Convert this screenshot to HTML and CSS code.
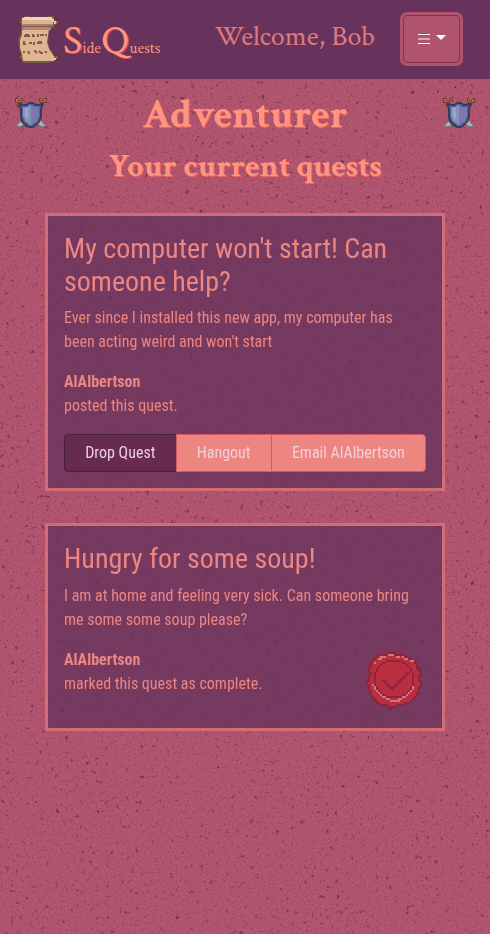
FILE: index.html
```html
<!DOCTYPE html>
<html lang="en">
<head>
<meta charset="utf-8">
<meta name="viewport" content="width=device-width, initial-scale=1">
<title>SideQuests</title>
<link rel="stylesheet" href="styles.css">
</head>
<body>
<svg class="texture" aria-hidden="true">
  <filter id="grain" x="0" y="0" width="100%" height="100%" color-interpolation-filters="sRGB">
    <feTurbulence type="fractalNoise" baseFrequency="0.5" numOctaves="2" seed="7" result="fine"/>
    <feColorMatrix in="fine" type="matrix" values="0 0 0 0 0.42  0 0 0 0 0.18  0 0 0 0 0.3  1.5 0 0 0 -0.82" result="dust"/>
    <feTurbulence type="fractalNoise" baseFrequency="0.2" numOctaves="3" seed="12"/>
    <feColorMatrix type="matrix" values="0 0 0 0 0.36  0 0 0 0 0.15  0 0 0 0 0.26  0 4 0 0 -2.7" result="specks"/>
    <feMerge><feMergeNode in="dust"/><feMergeNode in="specks"/></feMerge>
  </filter>
  <rect width="100%" height="100%" filter="url(#grain)"/>
</svg>

<svg class="defs" aria-hidden="true">
  <symbol id="shield" viewBox="0 0 32 32">
    <path d="M1 29L7 21L12 25L7 30H1ZM31 29L25 21L20 25L25 30H31Z" fill="#77747f"/>
    <path d="M2 29L7 23L11 25L6 29ZM30 29L25 23L21 25L26 29Z" fill="#b7b4b8"/>
    <path d="M0 1H3V3H6V1H8V4L5 9H3V6H0ZM32 1H29V3H26V1H24V4L27 9H29V6H32Z" fill="#713c2d"/>
    <path d="M1 2H3V4H6V2H7V4L4 7V5H1ZM31 2H29V4H26V2H25V4L28 7V5H31Z" fill="#b66b35"/>
    <path d="M4 5L8 7H11L14 5H18L21 7H24L28 5V9L27 12V20L25 25L21 29L18 31H14L10 29L6 25L5 20V12L4 9Z" fill="#363a5c"/>
    <path d="M6 8L9 9H12L14 7H18L20 9H23L26 8L25 13V20L23 25L18 29H14L9 25L7 20V13Z" fill="#596492"/>
    <path d="M8 10H12L15 8L17 9V28H15L10 24L8 19Z" fill="#8590bb"/>
    <path d="M10 11H13V23L10 19Z" fill="#9ca5ca"/>
    <path d="M16 9L20 10H24V19L22 24L16 28Z" fill="#7e77ad"/>
  </symbol>
</svg>

<header class="topbar">
  <a class="brand" href="#">
    <svg class="scroll" viewBox="0 0 48 48" aria-hidden="true">
      <path d="M2 8L7 4V11H4ZM39 2L45 6V8L40 12ZM2 42L7 38V46ZM37 39L41 38L46 42L40 47Z" fill="#5b3435"/>
      <path d="M4 7L7 5V10ZM40 5L44 7L40 10ZM4 42L7 40V44ZM39 41L44 42L40 45Z" fill="#a85e56"/>
      <path d="M6 2H10V1H14V2H33V1H39V4L41 7L39 13H34V20L33 27L35 34L39 39L40 47H35V48H9V47H7L6 40L4 33L3 25L6 17V12Z" fill="#6d5c49"/>
      <path d="M7 15H34L33 20L32 27L34 34L38 40L39 46H8L7 39L5 33L5 25L7 20Z" fill="#dfb591"/>
      <path d="M7 12H36V15H8Z" fill="#bd8378"/>
      <path d="M7 3H38V11H7Z" fill="#dfb591"/>
      <path d="M9 2H37V5H7Z" fill="#e9d6b2"/>
      <path d="M7 9H38V11H7Z" fill="#b27b66"/>
      <path d="M37 4H39V6H41V9H39V7H37ZM37 41H39V43H41V45H38Z" fill="#e1c69f"/>
      <path d="M9 21H11V20H13V21H15M17 20H18V21H20M22 20H23V22M25 20H28V21M30 20H32M8 27H9V29H11M14 28H16V27M18 29H19V27M22 28H24V27H26V29M9 36V38M13 36L14 38H15M19 36H20L22 38M24 36L26 38H28M30 37H32" fill="none" stroke="#815b51" stroke-width="2"/>
    </svg>
    <span class="wordmark"><span class="cap">S</span>ide<span class="cap">Q</span>uests</span>
  </a>
  <p class="welcome">Welcome, Bob</p>
  <button class="menu" type="button" aria-label="Menu" aria-haspopup="true">
    <svg class="bars" viewBox="0 0 12 12" aria-hidden="true"><path d="M0 1.5H12M0 6H12M0 10.5H12" stroke="#fff"/></svg>
    <svg class="caret" viewBox="0 0 10 5" aria-hidden="true"><path d="M0 0H10L5 5Z" fill="#fff"/></svg>
  </button>
</header>

<main>
  <div class="rank">
    <svg class="shield" aria-hidden="true"><use href="#shield"/></svg>
    <h1>Adventurer</h1>
    <svg class="shield" aria-hidden="true"><use href="#shield"/></svg>
  </div>
  <h2>Your current quests</h2>

  <section class="quests">
    <article class="quest">
      <h3>My computer won't start! Can someone help?</h3>
      <p>Ever since I installed this new app, my computer has been acting weird and won't start</p>
      <p><strong>AlAlbertson</strong><br>posted this quest.</p>
      <div class="actions">
        <button class="drop" type="button">Drop Quest</button>
        <button type="button">Hangout</button>
        <button type="button">Email AlAlbertson</button>
      </div>
    </article>

    <article class="quest">
      <h3>Hungry for some soup!</h3>
      <p>I am at home and feeling very sick. Can someone bring me some some soup please?</p>
      <div class="status">
        <p><strong>AlAlbertson</strong><br>marked this quest as complete.</p>
        <svg class="seal" id="seal" viewBox="0 0 32 32" shape-rendering="crispEdges" role="img" aria-label="Complete"></svg>
      </div>
    </article>
  </section>
</main>
<script src="seal.js"></script>
</body>
</html>
```
FILE: styles.css
```css
* { box-sizing: border-box; }

body {
  margin: 0;
  min-height: 100vh;
  background: #b2556f;
  color: #ed8681;
  font: 16px/24px "Roboto Condensed", Roboto, sans-serif;
}

h1, h2, h3, p { margin: 0; }

.texture {
  position: fixed;
  inset: 0;
  z-index: -1;
  width: 100%;
  height: 100%;
}

.defs { display: none; }

.topbar {
  display: flex;
  align-items: center;
  gap: 28px;
  padding: 15px 30px 16px 15px;
  background: #67335c;
  font-family: "Crimson Text", "Liberation Serif", serif;
}

.brand {
  display: flex;
  align-items: center;
  height: 48px;
  color: #ff9580;
  text-decoration: none;
}

.scroll { width: 48px; height: 48px; }

.wordmark {
  padding-top: 12px;
  font-size: 16px;
  line-height: 48px;
  white-space: nowrap;
}

.cap { font-size: 40px; text-shadow: 1px 1px #d94b58; }

.welcome {
  margin-left: auto;
  padding-bottom: 4px;
  color: #e17a7d;
  font-size: 28px;
  line-height: 32px;
  white-space: nowrap;
}

.menu {
  display: flex;
  align-items: center;
  justify-content: center;
  gap: 6px;
  width: 57px;
  height: 48px;
  padding: 0;
  border: 1px solid #8a3055;
  border-radius: 4px;
  background: #b0546e;
  box-shadow: 0 0 0 3px #b0546e;
}

.bars { width: 12px; height: 12px; }

.caret { width: 10px; height: 5px; margin-bottom: 4px; }

.rank {
  display: flex;
  justify-content: space-between;
  padding: 12px 15px 0;
}

.shield { width: 32px; height: 32px; margin-top: 6px; }

h1, h2 {
  color: #ff9580;
  font-family: "Crimson Text", "Liberation Serif", serif;
  font-weight: 700;
  text-align: center;
  text-shadow: 1px 1px #f0665f;
}

h1 { font-size: 40px; line-height: 48px; }

h2 { margin-top: 8px; font-size: 32px; line-height: 40px; }

.quests {
  display: grid;
  gap: 32px;
  padding: 26px 45px;
}

.quest {
  display: grid;
  gap: 16px;
  padding: 16px;
  border: 3px solid #d46c77;
  background: rgba(103, 51, 92, 0.8);
}

.quest h3 {
  min-height: 34px;
  margin-bottom: -8px;
  font-size: 28px;
  font-weight: 400;
  line-height: 33px;
}

.actions { display: flex; }

.actions button {
  flex: 1 1 auto;
  height: 38px;
  margin-left: -1px;
  padding: 0 12px;
  border: 1px solid #d4576a;
  background: #ed8681;
  color: #f0d0dc;
  font: inherit;
  white-space: nowrap;
}

.actions button:first-child { margin-left: 0; border-radius: 4px 0 0 4px; }

.actions button:last-child { border-radius: 0 4px 4px 0; }

.actions .drop {
  border-color: #48203f;
  background: #682b50;
  color: #ebcfdd;
}

.status { display: flex; justify-content: space-between; }

.seal { width: 64px; height: 64px; }
```
FILE: seal.js
```js
// Wax seal sprite: one character per pixel, each drawn as a unit square.
const colours = { d: "#8d2438", r: "#b92f40", m: "#94243a", p: "#cf7682" };
const rows = [
  "",
  "",
  "............ddddd",
  "........dddddpppdddddd",
  ".......drppprrrrrpprpdd",
  ".....ddrpprrrrrrrrrrrppdd",
  ".....drrrrrrmmmmmmmmrrrrppd",
  "....drprrrmmrrrrrrrrmmrrrrdd",
  "....drrrrmrrrrrrrrrrrrmrrrrd",
  "....drrrmrrrrrrrrrrrrrrmrrrd",
  "...drrrmrrrrrrrrrrrrrrrrmrrdd",
  "...drrrmrrrrrrrrrrrrrrrrmrrrdd",
  "....drmrrrrrrrrrrrrrrrmmrmrrrd",
  "....drmrrrrrrrrrrrrrrmmrrmrrdd",
  "...drrmrrrrrrrrrrrrrmmrrrmrrd",
  "...drrmrrrrrrrrrrrrmmrrrrmrrd",
  "..ddrrmrrrmmrrrrrrmmrrrrrmrrdd",
  "..drrrmrrrrmmrrrrmmrrrrrrmrrrd",
  "..ddrpmrrrrrmmrrmmrrrrrrrmrrrd",
  "...drrpmrrrrrmmmmrrrrrrrmprrdd",
  "...drrpmrrrrrrmmrrrrrrrrmprrd",
  "....drrpmrrrrrrrrrrrrrrmprrrd",
  "....drrrpmrrrrrrrrrrrrmprrrdd",
  "....drrrrpmmrrrrrrrrmmprrrrd",
  ".....drrrrppmmmmmmmmpprrrrd",
  ".....ddrrrrrpprrrrpprrrrrdd",
  "......ddrrrrrrppppprrrrrd",
  ".......ddrrrrrrrrrrrrddd",
  "........dddddrrrrddddd",
  "............ddddd",
  ".............dd"
];
const seal = document.getElementById("seal");
rows.forEach((row, y) => {
  [...row].forEach((key, x) => {
    if (!colours[key]) return;
    const pixel = document.createElementNS("http://www.w3.org/2000/svg", "rect");
    pixel.setAttribute("x", x);
    pixel.setAttribute("y", y);
    pixel.setAttribute("width", 1);
    pixel.setAttribute("height", 1);
    pixel.setAttribute("fill", colours[key]);
    seal.append(pixel);
  });
});
```
